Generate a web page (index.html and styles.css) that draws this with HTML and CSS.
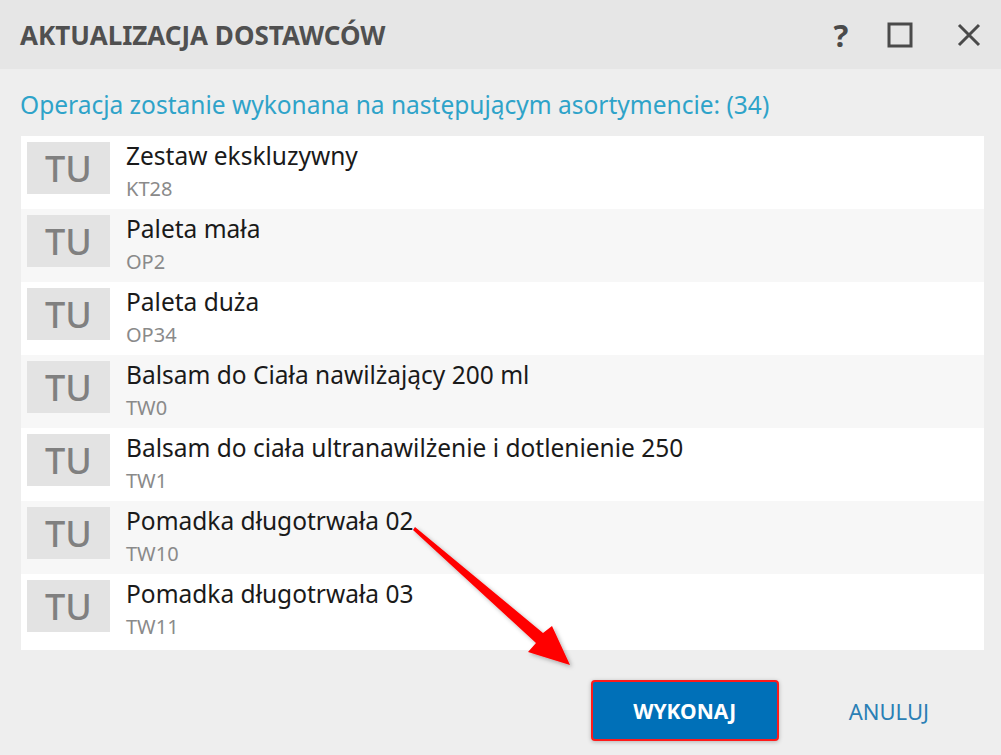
FILE: index.html
```html
<!DOCTYPE html>
<html lang="pl">
<head>
    <meta charset="UTF-8">
    <meta name="viewport" content="width=device-width, initial-scale=1.0">
    <title>Aktualizacja dostawców</title>
    <link rel="stylesheet" href="styles.css">
</head>
<body>

<div class="dialog">
    <header class="titlebar">
        <h1>AKTUALIZACJA DOSTAWCÓW</h1>
        <div class="window-actions">
            <span class="help">?</span>
            <svg class="icon" width="26" height="26" viewBox="0 0 26 26">
                <rect x="2" y="2" width="22" height="22" fill="none" stroke="#4a4a4a" stroke-width="3"/>
            </svg>
            <svg class="icon" width="26" height="26" viewBox="0 0 26 26">
                <path d="M3 3 L23 23 M23 3 L3 23" stroke="#4a4a4a" stroke-width="3" fill="none"/>
            </svg>
        </div>
    </header>

    <div class="content">
        <p class="lead">Operacja zostanie wykonana na następującym asortymencie: (34)</p>

        <ul class="items">
            <li class="item">
                <span class="thumb">TU</span>
                <div class="info"><span class="name">Zestaw ekskluzywny</span><span class="code">KT28</span></div>
            </li>
            <li class="item">
                <span class="thumb">TU</span>
                <div class="info"><span class="name">Paleta mała</span><span class="code">OP2</span></div>
            </li>
            <li class="item">
                <span class="thumb">TU</span>
                <div class="info"><span class="name">Paleta duża</span><span class="code">OP34</span></div>
            </li>
            <li class="item">
                <span class="thumb">TU</span>
                <div class="info"><span class="name">Balsam do Ciała nawilżający 200 ml</span><span class="code">TW0</span></div>
            </li>
            <li class="item">
                <span class="thumb">TU</span>
                <div class="info"><span class="name">Balsam do ciała ultranawilżenie i dotlenienie 250</span><span class="code">TW1</span></div>
            </li>
            <li class="item">
                <span class="thumb">TU</span>
                <div class="info"><span class="name">Pomadka długotrwała 02</span><span class="code">TW10</span></div>
            </li>
            <li class="item">
                <span class="thumb">TU</span>
                <div class="info"><span class="name">Pomadka długotrwała 03</span><span class="code">TW11</span></div>
            </li>
        </ul>

        <footer class="buttons">
            <button class="btn-primary">WYKONAJ</button>
            <button class="btn-link">ANULUJ</button>
        </footer>
    </div>

    <!-- annotation arrow -->
    <svg class="arrow" width="1001" height="755" viewBox="0 0 1001 755">
        <defs>
            <filter id="shadow" x="-20%" y="-20%" width="140%" height="140%">
                <feDropShadow dx="2" dy="2" stdDeviation="2" flood-color="#000" flood-opacity="0.3"/>
            </filter>
        </defs>
        <polygon filter="url(#shadow)" fill="#ff0000"
                 points="415,527 543,633 552,626 570,665 528,652 536,643 413,530"/>
    </svg>
</div>

</body>
</html>
```

FILE: styles.css
```css
html, body {
    margin: 0;
    padding: 0;
}
body {
    font-family: "Noto Sans", "Open Sans", Arial, sans-serif;
    background: #eeeeee;
}
.dialog {
    position: relative;
    width: 1001px;
    height: 755px;
    background: #eeeeee;
    overflow: hidden;
}
.titlebar {
    height: 69px;
    background: #e6e6e6;
    display: flex;
    align-items: center;
    justify-content: space-between;
    padding: 0 19px 0 20px;
    box-sizing: border-box;
}
.titlebar h1 {
    margin: 0;
    font-size: 26px;
    font-weight: 700;
    color: #505050;
}
.window-actions {
    display: flex;
    align-items: center;
}
.help {
    font-size: 31px;
    font-weight: 700;
    color: #4a4a4a;
    width: 24px;
    text-align: center;
    margin-right: 34px;
}
.icon {
    display: block;
}
.icon + .icon {
    margin-left: 43px;
}
.content {
    padding: 0 17px 0 21px;
}
.lead {
    margin: 0 0 0 -1px;
    padding: 20px 0 15px;
    font-size: 24.5px;
    line-height: 32px;
    color: #2ea3c9;
}
.items {
    list-style: none;
    margin: 0;
    padding: 0 0 3px;
    background: #ffffff;
}
.item {
    display: flex;
    height: 73px;
    padding: 6px 0 0 6px;
    box-sizing: border-box;
}
.item:nth-child(even) {
    background: #f7f7f7;
}
.thumb {
    width: 83px;
    height: 52px;
    background: #e3e3e3;
    color: #808080;
    font-size: 36px;
    font-weight: 500;
    display: flex;
    align-items: center;
    justify-content: center;
    flex-shrink: 0;
}
.info {
    display: flex;
    flex-direction: column;
    margin-left: 16px;
}
.name {
    font-size: 24.5px;
    line-height: 28px;
    color: #1a1a1a;
    margin-top: 0;
}
.code {
    font-size: 20px;
    line-height: 24px;
    color: #8a8a8a;
    margin-top: 7px;
}
.buttons {
    display: flex;
    justify-content: flex-end;
    align-items: center;
    margin-top: 30px;
    padding-right: 55px;
}
.btn-primary {
    width: 188px;
    height: 61px;
    background: #0070b8;
    color: #ffffff;
    font-family: inherit;
    font-size: 21px;
    font-weight: 700;
    border: 2px solid #ff1a1a;
    border-radius: 4px;
    box-shadow: 0 1px 4px rgba(0, 0, 0, 0.25);
    cursor: pointer;
}
.btn-link {
    margin-left: 70px;
    background: none;
    border: none;
    padding: 0;
    color: #2a7fb5;
    font-family: inherit;
    font-size: 22px;
    cursor: pointer;
}
.arrow {
    position: absolute;
    left: 0;
    top: 0;
    pointer-events: none;
}
```
